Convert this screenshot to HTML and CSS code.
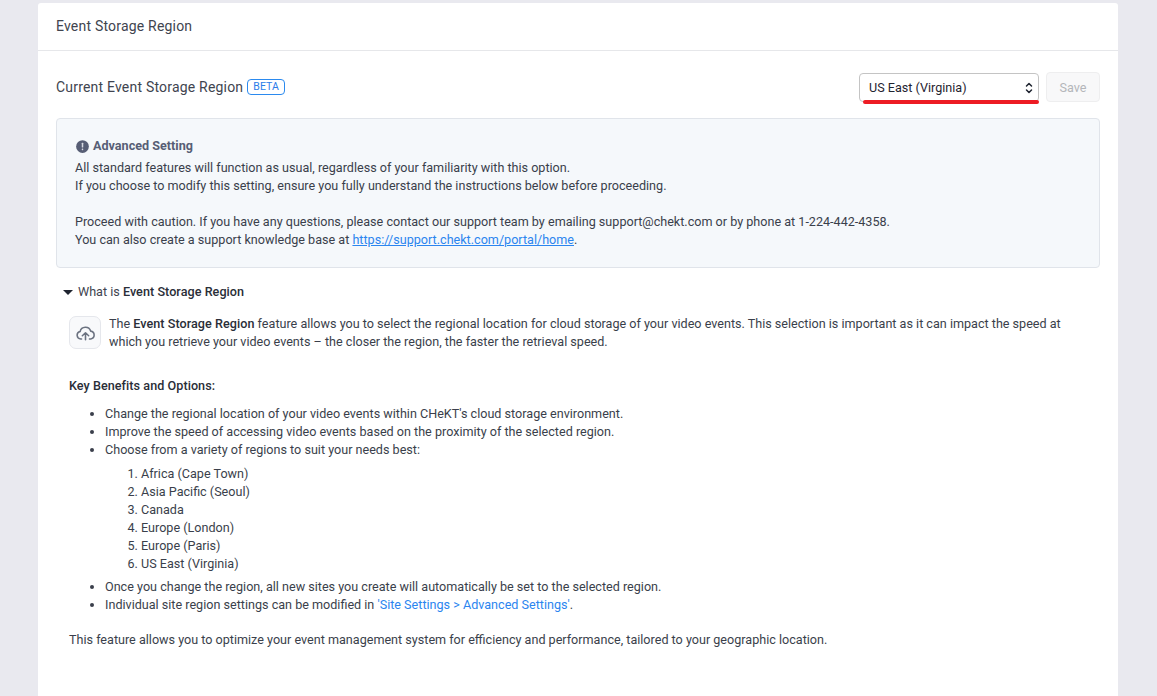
FILE: index.html
```html
<!DOCTYPE html>
<html lang="en">
<head>
<meta charset="utf-8">
<title>Event Storage Region</title>
<link rel="stylesheet" href="styles.css">
</head>
<body>
<main class="card">
  <header class="card-head">Event Storage Region</header>
  <div class="card-body">
    <div class="region-row">
      <div class="region-label">Current Event Storage Region <span class="beta">BETA</span></div>
      <div class="region-controls">
        <div class="select-wrap">
          <select class="select"><option>US East (Virginia)</option></select>
          <svg class="select-arrows" viewBox="0 0 8 12" fill="none" stroke="#1f2430" stroke-width="1.5" stroke-linecap="round" stroke-linejoin="round"><path d="M1.500 4 4 1.500 6.500 4M1.500 8 4 10.500 6.500 8"/></svg>
          <span class="red-line"></span>
        </div>
        <button class="save" disabled>Save</button>
      </div>
    </div>
    <section class="notice">
      <h4 class="notice-title">
        <svg class="notice-icon" viewBox="0 0 16 16"><circle cx="8" cy="8" r="6.800" fill="#575e75"/><rect x="7.200" y="4" width="1.600" height="5" rx=".6" fill="#d8dae2"/><rect x="7.200" y="10.200" width="1.600" height="1.700" rx=".6" fill="#d8dae2"/></svg>
        Advanced Setting
      </h4>
      <p>All standard features will function as usual, regardless of your familiarity with this option.<br>If you choose to modify this setting, ensure you fully understand the instructions below before proceeding.</p>
      <p class="gap">Proceed with caution. If you have any questions, please contact our support team by emailing support@chekt.com or by phone at 1-224-442-4358.<br>You can also create a support knowledge base at <a href="#">https://support.chekt.com/portal/home</a>.</p>
    </section>
    <div class="what-toggle"><span class="caret"></span><span>What is <b>Event Storage Region</b></span></div>
    <div class="what-body">
      <div class="intro">
        <div class="intro-icon">
          <svg viewBox="0 0 24 20" width="19" height="16" fill="none" stroke="#6b7280" stroke-width="2" stroke-linecap="round" stroke-linejoin="round"><path d="M7 17.500H6a4.700 4.700 0 0 1-.8-9.300A6.900 6.900 0 0 1 18.500 7.600a5 5 0 0 1 .2 9.900H17"/><path d="M12 18.500V10M8 13.500l4-3.800 4 3.800"/></svg>
        </div>
        <p>The <b>Event Storage Region</b> feature allows you to select the regional location for cloud storage of your video events. This selection is important as it can impact the speed at which you retrieve your video events – the closer the region, the faster the retrieval speed.</p>
      </div>
      <h5 class="benefits">Key Benefits and Options:</h5>
      <ul class="list">
        <li>Change the regional location of your video events within CHeKT's cloud storage environment.</li>
        <li>Improve the speed of accessing video events based on the proximity of the selected region.</li>
        <li>Choose from a variety of regions to suit your needs best:
          <ol class="regions">
            <li>Africa (Cape Town)</li>
            <li>Asia Pacific (Seoul)</li>
            <li>Canada</li>
            <li>Europe (London)</li>
            <li>Europe (Paris)</li>
            <li>US East (Virginia)</li>
          </ol>
        </li>
        <li>Once you change the region, all new sites you create will automatically be set to the selected region.</li>
        <li>Individual site region settings can be modified in <a href="#">'Site Settings &gt; Advanced Settings'</a>.</li>
      </ul>
      <p class="closing">This feature allows you to optimize your event management system for efficiency and performance, tailored to your geographic location.</p>
    </div>
  </div>
</main>
</body>
</html>
```
FILE: styles.css
```css
* { box-sizing: border-box; }
html, body { height: 100%; }
body {
  margin: 0;
  padding: 3px 39px 0 38px;
  background: #e9e9ef;
  font-family: Roboto, "Liberation Sans", sans-serif;
  font-size: 12.6px;
  line-height: 18px;
  color: #3a3f4b;
  overflow: hidden;
}
.card {
  background: #fff;
  border-radius: 3px 3px 0 0;
  height: 100%;
}
.card-head {
  height: 48px;
  padding: 0 18px 2px;
  display: flex;
  align-items: center;
  font-size: 14px;
  letter-spacing: .2px;
  color: #40444f;
  border-bottom: 1px solid #e6e7ea;
}
.card-body { padding: 21px 18px 0; }
.region-row {
  display: flex;
  justify-content: space-between;
  align-items: center;
  height: 30px;
}
.region-label { font-size: 14px; letter-spacing: .2px; color: #40444f; display: flex; align-items: center; gap: 4px; }
.beta {
  display: inline-block;
  font-size: 10.5px;
  line-height: 14px;
  letter-spacing: .1px;
  color: #2b7de9;
  border: 1px solid #2b8aef;
  border-radius: 4px;
  padding: 0 5px;
  height: 16px;
  margin-top: -1px;
}
.region-controls { display: flex; align-items: center; gap: 7px; }
.select-wrap { position: relative; width: 180px; height: 29px; }
.select {
  display: block;
  width: 100%;
  height: 29px;
  padding: 0 9px;
  border: 1px solid #c4c4c4;
  border-radius: 4px;
  background-color: #fff;
  font-family: inherit;
  font-size: 12.6px;
  color: #1f2430;
  appearance: none;
}
.select-arrows {
  position: absolute;
  right: 6px;
  top: 9px;
  width: 8px;
  height: 12px;
  pointer-events: none;
}
.red-line {
  position: absolute;
  left: 4px;
  right: 0;
  bottom: -2px;
  height: 4px;
  border-radius: 2px;
  background: #ed1c24;
}
.save {
  width: 54px;
  height: 30px;
  padding: 0;
  background: #f8f8f9;
  border: 1px solid #eeeeef;
  border-radius: 4px;
  font-family: inherit;
  font-size: 12.6px;
  color: #b4b6ba;
}
.notice {
  margin-top: 16px;
  height: 150px;
  padding: 18px 18px 0;
  background: #f5f8fb;
  border: 1px solid #e0e4ea;
  border-radius: 4px;
}
.notice-title {
  margin: 0 0 4px;
  height: 18px;
  display: flex;
  align-items: center;
  gap: 3px;
  font-size: 12.6px;
  font-weight: 700;
  color: #575e75;
}
.notice-icon { width: 15px; height: 15px; }
.notice p { margin: 0; }
.notice .gap { margin-top: 18px; }
a { color: #2b85ef; }
.notice a { text-decoration: underline; }
.list a { text-decoration: none; }
.what-toggle {
  margin-top: 15px;
  padding-left: 7px;
  display: flex;
  align-items: center;
  color: #40444f;
}
.what-toggle b { font-weight: 500; letter-spacing: .05px; color: #2a2e38; }
.caret {
  width: 0;
  height: 0;
  margin-right: 5px;
  border-left: 5px solid transparent;
  border-right: 5px solid transparent;
  border-top: 5px solid #1f2430;
}
.what-body { padding: 0 0 0 13px; }
.what-body b { font-weight: 500; letter-spacing: .05px; color: #2a2e38; }
.intro { display: flex; gap: 8px; margin-top: 15px; }
.intro-icon {
  flex: none;
  width: 32px;
  height: 33px;
  display: flex;
  align-items: center;
  justify-content: center;
  background: #f8f9fb;
  border: 1px solid #e5e7ec;
  border-radius: 7px;
}
.intro p { margin: -1px 20px 0 0; }
.benefits { margin: 26px 0 0; font-size: 12.6px; font-weight: 500; letter-spacing: .05px; line-height: 18px; color: #2a2e38; }
.list { margin: 10px 0 0; padding: 0 0 0 36px; }
.regions { margin: 6px 0 5px; padding: 0 0 0 36px; }
.closing { margin: 17px 0 0; }
```
